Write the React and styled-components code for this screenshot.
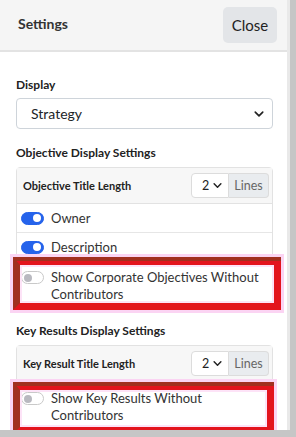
import React from "react";
import styled, { createGlobalStyle } from "styled-components";

const GlobalStyle = createGlobalStyle`
  body {
    margin: 0;
    background: #c6c6c6;
    font-family: Lato, "Noto Sans", sans-serif;
    color: #212529;
  }
`;

const Page = styled.div`
  width: 296px;
  height: 437px;
  overflow: hidden;
  background: #c6c6c6;
`;

const Panel = styled.div`
  width: 287px;
  height: 430px;
  background: #fff;
  border-right: 3px solid #e9e9e9;
  overflow: hidden;
`;

const Header = styled.header`
  height: 50px;
  background: #f5f5f5;
  border-bottom: 2px solid #e3e3e3;
  display: flex;
  align-items: center;
  justify-content: space-between;
  padding: 0 10px 0 18px;
`;

const Title = styled.h5`
  margin: 0 0 3px;
  font-size: 14px;
  font-weight: 700;
  color: #333;
`;

const CloseButton = styled.button`
  width: 54px;
  height: 36px;
  border: none;
  border-radius: 5px;
  background: #e3e5e8;
  color: #222;
  font-family: inherit;
  font-size: 15px;
  padding: 0;
`;

const Body = styled.div`
  padding: 25px 14px 0 16px;
`;

const Label = styled.div`
  font-size: 12px;
  font-weight: 700;
  line-height: 16px;
  color: #222;
  margin-top: ${(p) => p.$mt || 0}px;
`;

const SelectBox = styled.div`
  margin-top: 5px;
  height: 31px;
  box-sizing: border-box;
  border: 1px solid #ced4da;
  border-radius: 4px;
  display: flex;
  align-items: center;
  justify-content: space-between;
  padding: 0 8px 0 14px;
  font-size: 14px;
  color: #212529;
`;

const Card = styled.div`
  margin-top: 6px;
  border: 1px solid #e2e2e2;
  border-radius: 4px;
`;

const CardHeader = styled.div`
  height: 35px;
  background: #f7f7f7;
  border-bottom: 1px solid #e2e2e2;
  display: flex;
  align-items: center;
  justify-content: space-between;
  padding: 0 3px 0 6px;
  font-size: 11px;
  font-weight: 700;
  color: #222;
`;

const InputGroup = styled.div`
  display: flex;
  height: 25px;
  font-size: 12.5px;
  font-weight: 400;
`;

const NumSelect = styled.div`
  width: 38px;
  box-sizing: border-box;
  border: 1px solid #dcdcdc;
  border-radius: 4px 0 0 4px;
  background: #fff;
  display: flex;
  align-items: center;
  justify-content: space-between;
  padding: 0 6px 0 10px;
  color: #222;
`;

const Addon = styled.div`
  width: 40px;
  box-sizing: border-box;
  border: 1px solid #dcdcdc;
  border-left: none;
  border-radius: 0 4px 4px 0;
  background: #e9ecef;
  display: flex;
  align-items: center;
  justify-content: center;
  color: #666;
`;

const Row = styled.div`
  position: relative;
  display: flex;
  align-items: flex-start;
  gap: 7px;
  padding: ${(p) => p.$pad}px 2px ${(p) => p.$pad}px 4px;
  border-bottom: ${(p) => (p.$last ? "none" : "1px solid #e6e6e6")};
  font-size: 13px;
  line-height: 17px;
  color: #333;
`;

const Switch = styled.span`
  flex: none;
  position: relative;
  width: 23px;
  height: 13px;
  margin-top: 2px;
  box-sizing: border-box;
  border-radius: 7px;
  border: 1px solid ${(p) => (p.$on ? "#2563eb" : "#c9c9c9")};
  background: ${(p) => (p.$on ? "#2563eb" : "#fff")};
  &::after {
    content: "";
    position: absolute;
    top: 1.5px;
    left: ${(p) => (p.$on ? "11px" : "1.5px")};
    width: 8px;
    height: 8px;
    border-radius: 50%;
    background: ${(p) => (p.$on ? "#fff" : "#b9b9c0")};
  }
`;

const Highlight = styled.span`
  position: absolute;
  top: ${(p) => p.$t}px;
  left: ${(p) => p.$l}px;
  right: ${(p) => p.$r}px;
  bottom: ${(p) => p.$b}px;
  border: 7px solid #e3141d;
  border-top-width: 8px;
  border-left-color: #a1301f;
  box-shadow: 0 0 0 3px #fbd4f3, inset 0 0 0 2px #fde3f7;
  pointer-events: none;
  &::before {
    content: "";
    position: absolute;
    top: -8px;
    left: -7px;
    right: -7px;
    height: 4px;
    background: #a1301f;
  }
`;

const Chevron = ({ size = 10 }) => (
  <svg width={size} height={size} viewBox="0 0 16 16">
    <path d="M2 5l6 6 6-6" fill="none" stroke="#222" strokeWidth="2.6" strokeLinecap="round" strokeLinejoin="round" />
  </svg>
);

function TitleLength({ label }) {
  return (
    <CardHeader>
      <span>{label}</span>
      <InputGroup>
        <NumSelect>
          <span>2</span>
          <Chevron size={9} />
        </NumSelect>
        <Addon>Lines</Addon>
      </InputGroup>
    </CardHeader>
  );
}

export default function App() {
  return (
    <Page>
      <GlobalStyle />
      <Panel>
        <Header>
          <Title>Settings</Title>
          <CloseButton>Close</CloseButton>
        </Header>
        <Body>
          <Label>Display</Label>
          <SelectBox>
            <span>Strategy</span>
            <Chevron />
          </SelectBox>

          <Label $mt={16}>Objective Display Settings</Label>
          <Card>
            <TitleLength label="Objective Title Length" />
            <Row $pad={5.5}>
              <Switch $on />
              Owner
            </Row>
            <Row $pad={5.5}>
              <Switch $on />
              Description
            </Row>
            <Row $pad={7} $last>
              <Switch />
              Show Corporate Objectives Without Contributors
              <Highlight $t={-5} $l={-4} $r={-9} $b={0} />
            </Row>
          </Card>

          <Label $mt={12}>Key Results Display Settings</Label>
          <Card>
            <TitleLength label="Key Result Title Length" />
            <Row $pad={8} $last>
              <Switch />
              Show Key Results Without Contributors
              <Highlight $t={0} $l={-4} $r={-2} $b={-2} />
            </Row>
          </Card>
        </Body>
      </Panel>
    </Page>
  );
}
